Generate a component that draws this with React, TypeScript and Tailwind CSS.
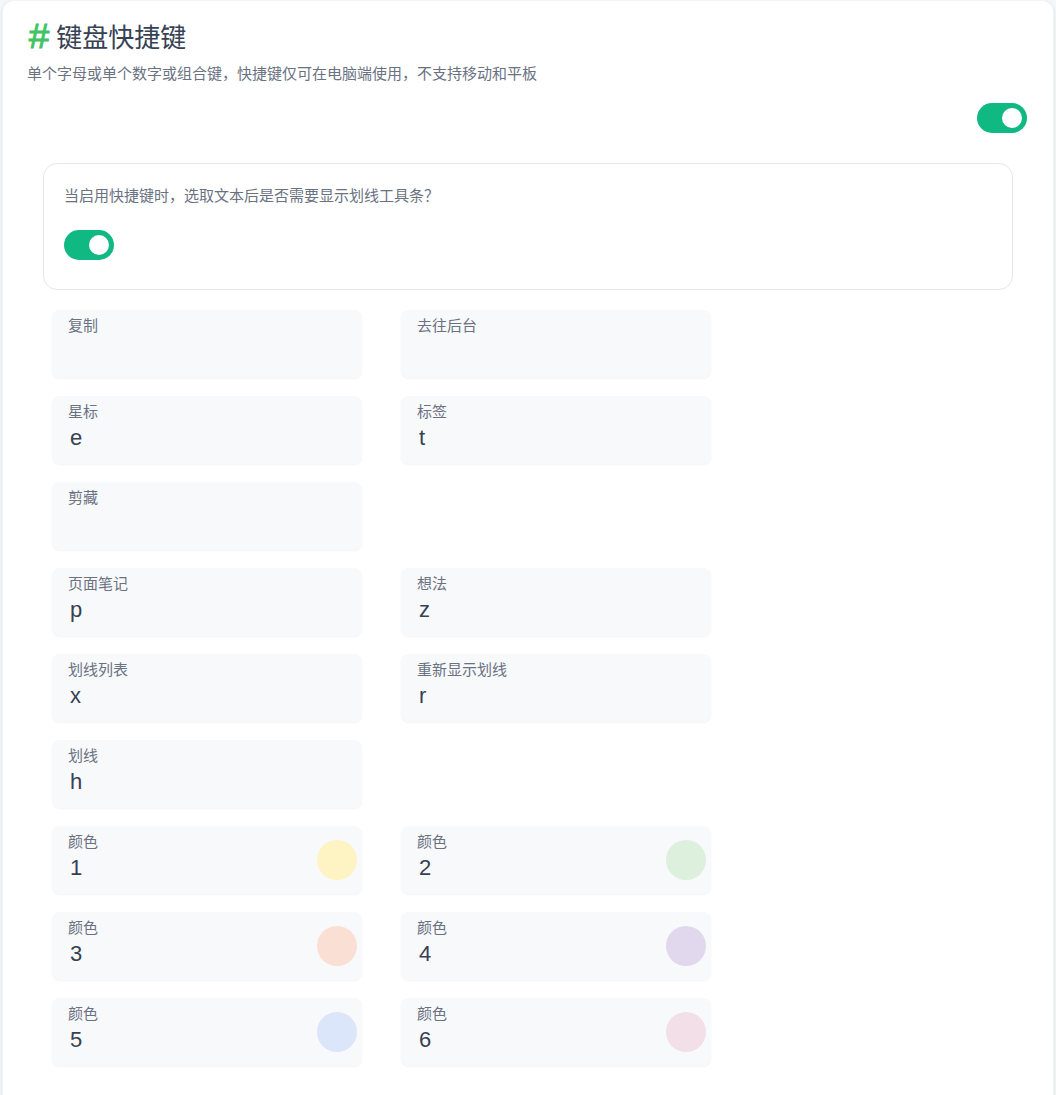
import React from 'react';

type Shortcut = { label: string; value?: string; color?: string } | null;

const rows: Shortcut[][] = [
  [{ label: '复制' }, { label: '去往后台' }],
  [{ label: '星标', value: 'e' }, { label: '标签', value: 't' }],
  [{ label: '剪藏' }, null],
  [{ label: '页面笔记', value: 'p' }, { label: '想法', value: 'z' }],
  [{ label: '划线列表', value: 'x' }, { label: '重新显示划线', value: 'r' }],
  [{ label: '划线', value: 'h' }, null],
  [
    { label: '颜色', value: '1', color: 'bg-[#fdf3c3]' },
    { label: '颜色', value: '2', color: 'bg-[#dcf0dd]' },
  ],
  [
    { label: '颜色', value: '3', color: 'bg-[#fadfd4]' },
    { label: '颜色', value: '4', color: 'bg-[#e1d8ed]' },
  ],
  [
    { label: '颜色', value: '5', color: 'bg-[#dbe6fb]' },
    { label: '颜色', value: '6', color: 'bg-[#f3dfe8]' },
  ],
];

const Toggle: React.FC = () => (
  <div className="relative h-[30px] w-[50px] rounded-full bg-[#10b981]">
    <span className="absolute right-[5px] top-[5px] h-5 w-5 rounded-full bg-white" />
  </div>
);

const ShortcutItem: React.FC<{ item: Shortcut }> = ({ item }) => {
  if (!item) return <div className="w-[310px]" />;
  return (
    <div className="flex h-[68px] w-[310px] items-center justify-between rounded-lg bg-[#f8f9fb] pl-4 pr-[5px] shadow-[0_1px_2px_rgba(0,0,0,0.05)]">
      <div className="flex h-full flex-col pt-[6px]">
        <span className="text-[15px] leading-5 text-gray-500">{item.label}</span>
        {item.value && (
          <span className="mt-[2px] pl-[2px] text-[22px] leading-7 text-gray-700">{item.value}</span>
        )}
      </div>
      {item.color && <div className={`h-10 w-10 rounded-full ${item.color}`} />}
    </div>
  );
};

export default function App() {
  return (
    <div
      className="min-h-screen bg-[#f5f6f8] px-[2px]"
      style={{ fontFamily: '"Liberation Sans", "Noto Sans CJK SC", sans-serif' }}
    >
      <div className="rounded-xl border border-gray-100 bg-white px-6 pb-10 pt-[21px] shadow-sm">
        <h1 className="flex h-8 items-center text-[26px] leading-8 text-gray-700">
          <span
            className="ml-[1px] mr-[6px] text-[37px] leading-8 text-[#40c463] [-webkit-text-stroke:1px_#40c463]"
            style={{ fontFamily: '"Liberation Mono", monospace' }}
          >
            #
          </span>
          键盘快捷键
        </h1>
        <p className="mt-[10px] text-[15px] leading-5 text-gray-500">
          单个字母或单个数字或组合键，快捷键仅可在电脑端使用，不支持移动和平板
        </p>

        <div className="mt-[19px] flex justify-end pr-[2px]">
          <Toggle />
        </div>

        <div className="mt-[30px] px-4">
          <div className="h-[127px] rounded-[14px] border border-gray-200 px-5 pt-[22px]">
            <p className="text-[15px] leading-5 text-gray-500">当启用快捷键时，选取文本后是否需要显示划线工具条？</p>
            <div className="mt-[24px]">
              <Toggle />
            </div>
          </div>

          <div className="mt-5 flex flex-col gap-[18px] px-[9px]">
            {rows.map((row, i) => (
              <div key={i} className="flex gap-[39px]">
                {row.map((item, j) => (
                  <ShortcutItem key={j} item={item} />
                ))}
              </div>
            ))}
          </div>
        </div>
      </div>
    </div>
  );
}
